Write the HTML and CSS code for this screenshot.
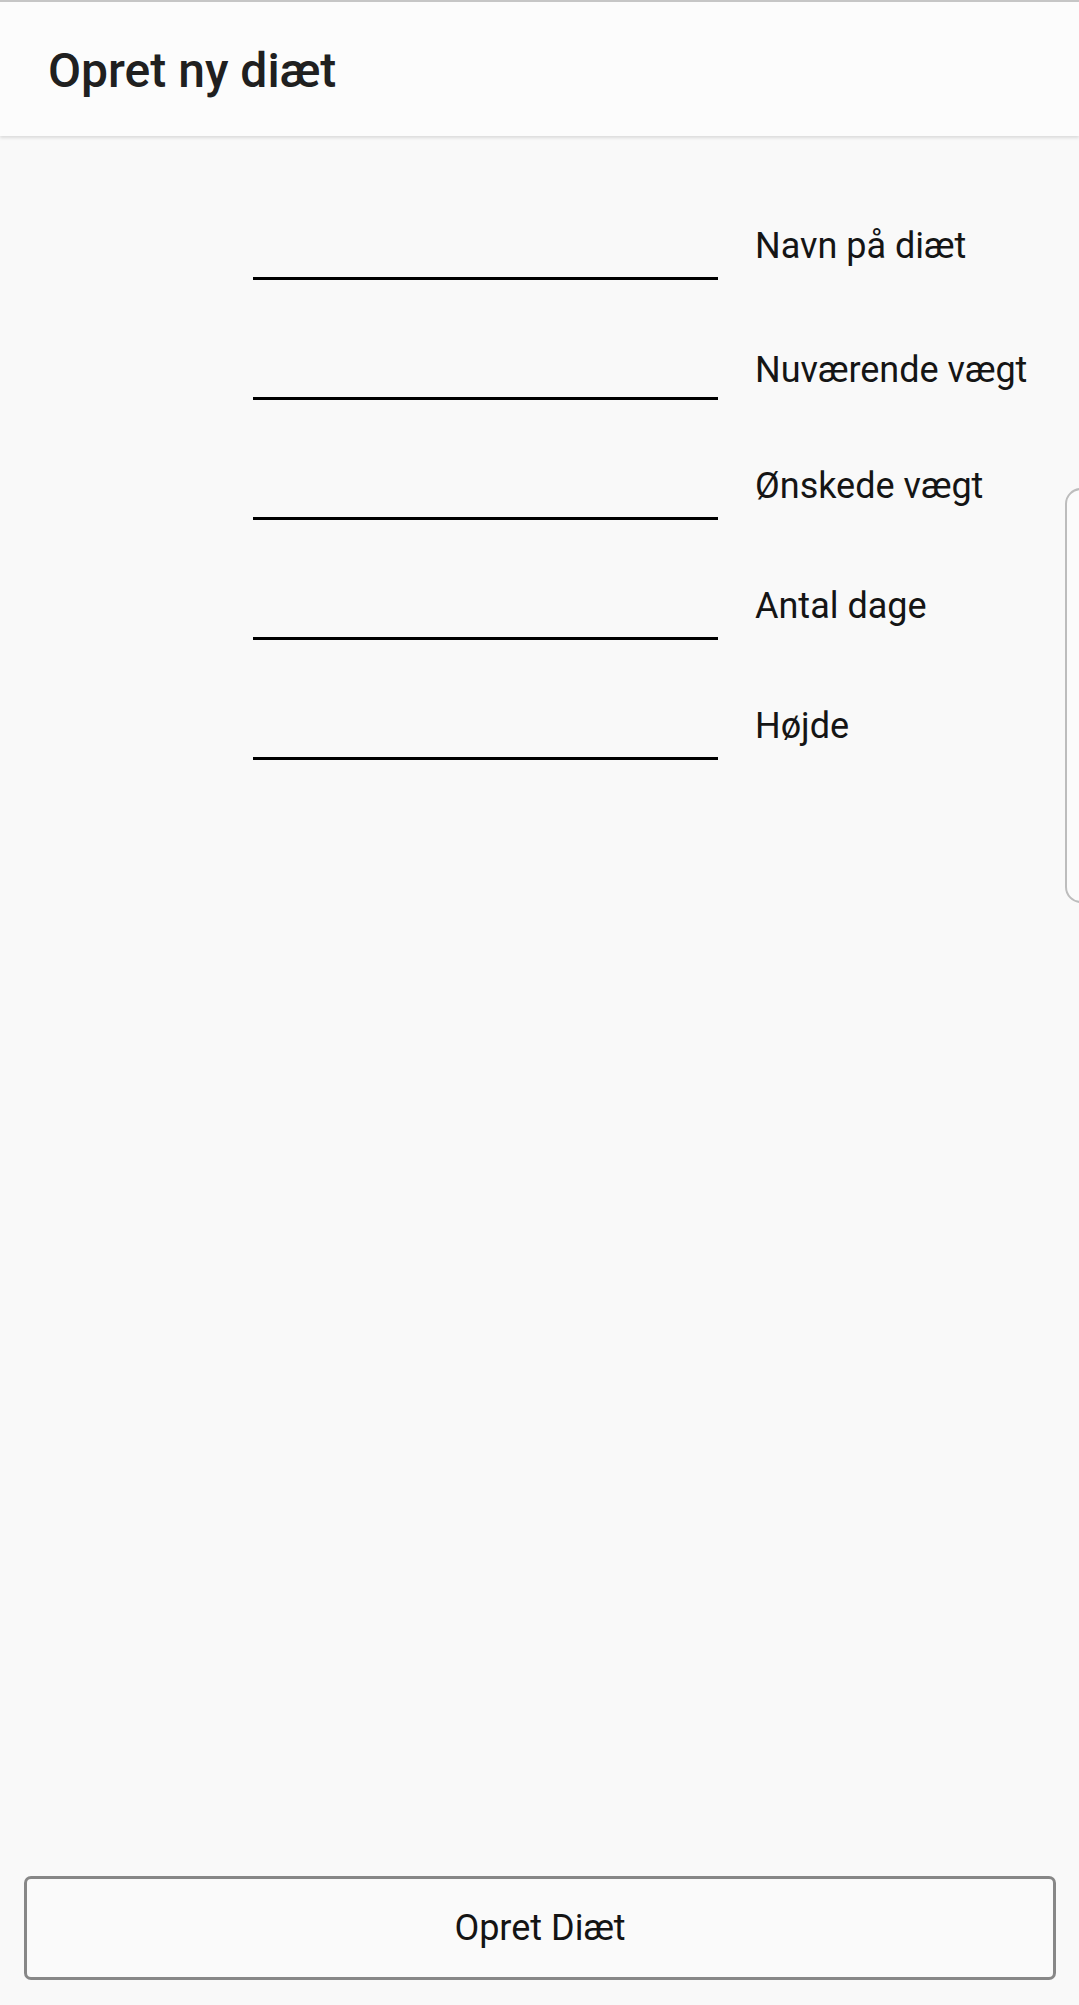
FILE: index.html
```html
<!DOCTYPE html>
<html lang="da">
<head>
<meta charset="utf-8">
<title>Opret ny diæt</title>
<link rel="stylesheet" href="styles.css">
</head>
<body>
  <header class="appbar">
    <h1 class="appbar-title">Opret ny diæt</h1>
  </header>
  <main class="form">
    <div class="row">
      <div class="field"></div>
      <span class="label">Navn på diæt</span>
    </div>
    <div class="row">
      <div class="field"></div>
      <span class="label label-low">Nuværende vægt</span>
    </div>
    <div class="row">
      <div class="field"></div>
      <span class="label">Ønskede vægt</span>
    </div>
    <div class="row">
      <div class="field"></div>
      <span class="label">Antal dage</span>
    </div>
    <div class="row">
      <div class="field"></div>
      <span class="label">Højde</span>
    </div>
  </main>
  <footer class="actions">
    <button class="btn" type="button">Opret Diæt</button>
  </footer>
  <div class="edge-handle"></div>
</body>
</html>
```

FILE: styles.css
```css
html, body {
  margin: 0;
  padding: 0;
}
body {
  width: 1079px;
  height: 2005px;
  overflow: hidden;
  background: #f9f9f9;
  font-family: Roboto, "Noto Sans", sans-serif;
  color: #1e1e1e;
  display: flex;
  flex-direction: column;
  position: relative;
}
.appbar {
  height: 134px;
  border-top: 2px solid #c6c6c6;
  background: #fcfcfc;
  box-shadow: 0 2px 3px rgba(0,0,0,0.12);
  display: flex;
  align-items: center;
  padding-left: 48px;
  position: relative;
  z-index: 1;
}
.appbar-title {
  margin: 0;
  font-size: 48px;
  font-weight: 500;
  color: #202020;
  padding-top: 2px;
}
.form {
  flex: 1;
  padding-top: 24px;
  display: flex;
  flex-direction: column;
}
.row {
  height: 120px;
  display: flex;
  align-items: flex-end;
  padding-left: 253px;
}
.field {
  width: 465px;
  height: 3px;
  background: #000;
}
.label {
  margin-left: 37px;
  margin-bottom: 16px;
  font-size: 36px;
  line-height: 1;
  color: #151515;
  white-space: nowrap;
}
.label-low {
  margin-bottom: 12px;
}
.actions {
  padding: 0 23px 25px 24px;
}
.btn {
  display: block;
  width: 100%;
  height: 104px;
  background: #fafafa;
  border: 3px solid #878787;
  border-radius: 7px;
  font-family: Roboto, "Noto Sans", sans-serif;
  font-size: 36px;
  font-weight: 400;
  color: #141414;
  padding: 0;
}
.edge-handle {
  position: absolute;
  left: 1065px;
  top: 488px;
  width: 40px;
  height: 411px;
  border: 2px solid #bdbdbd;
  border-radius: 16px;
  background: #fbfbfb;
}
```
